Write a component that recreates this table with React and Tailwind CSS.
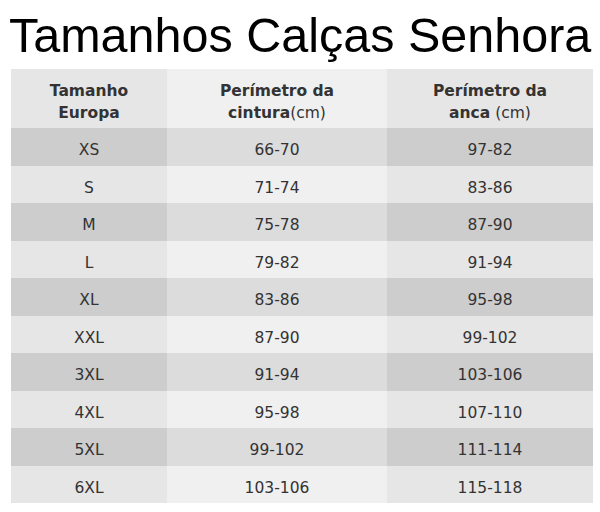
import React from "react";

const rows = [
  ["XS", "66-70", "97-82"],
  ["S", "71-74", "83-86"],
  ["M", "75-78", "87-90"],
  ["L", "79-82", "91-94"],
  ["XL", "83-86", "95-98"],
  ["XXL", "87-90", "99-102"],
  ["3XL", "91-94", "103-106"],
  ["4XL", "95-98", "107-110"],
  ["5XL", "99-102", "111-114"],
  ["6XL", "103-106", "115-118"],
];

export default function App() {
  return (
    <div className="w-[600px] h-[512px] bg-white">
      <h1 className="h-[69px] pl-[9px] pt-[7px] text-[48.5px] leading-[56px] text-black font-['Liberation_Sans',Arial,sans-serif]">
        Tamanhos Calças Senhora
      </h1>
      <div className="ml-[11px] w-[582px] font-['DejaVu_Sans',Verdana,sans-serif] text-[15.5px] text-[#333]">
        <div className="grid grid-cols-[156px_220px_206px] h-[59px]">
          <div className="bg-[#e6e6e6] flex items-center justify-center text-center font-bold leading-[22px] pt-[6px]">
            <span>Tamanho<br />Europa</span>
          </div>
          <div className="bg-[#f0f0f0] flex items-center justify-center text-center leading-[22px] pt-[6px]">
            <span><b>Perímetro da</b><br /><b>cintura</b>(cm)</span>
          </div>
          <div className="bg-[#e6e6e6] flex items-center justify-center text-center leading-[22px] pt-[6px]">
            <span><b>Perímetro da</b><br /><b>anca</b> (cm)</span>
          </div>
        </div>
        {rows.map((r, i) => {
          const odd = i % 2 === 0;
          return (
            <div key={r[0]} className="grid grid-cols-[156px_220px_206px] h-[37.5px]">
              <div className={"flex items-center justify-center pt-[8px] " + (odd ? "bg-[#cdcdcd]" : "bg-[#e6e6e6]")}>{r[0]}</div>
              <div className={"flex items-center justify-center pt-[8px] " + (odd ? "bg-[#dcdcdc]" : "bg-[#f0f0f0]")}>{r[1]}</div>
              <div className={"flex items-center justify-center pt-[8px] " + (odd ? "bg-[#cdcdcd]" : "bg-[#e6e6e6]")}>{r[2]}</div>
            </div>
          );
        })}
      </div>
    </div>
  );
}
